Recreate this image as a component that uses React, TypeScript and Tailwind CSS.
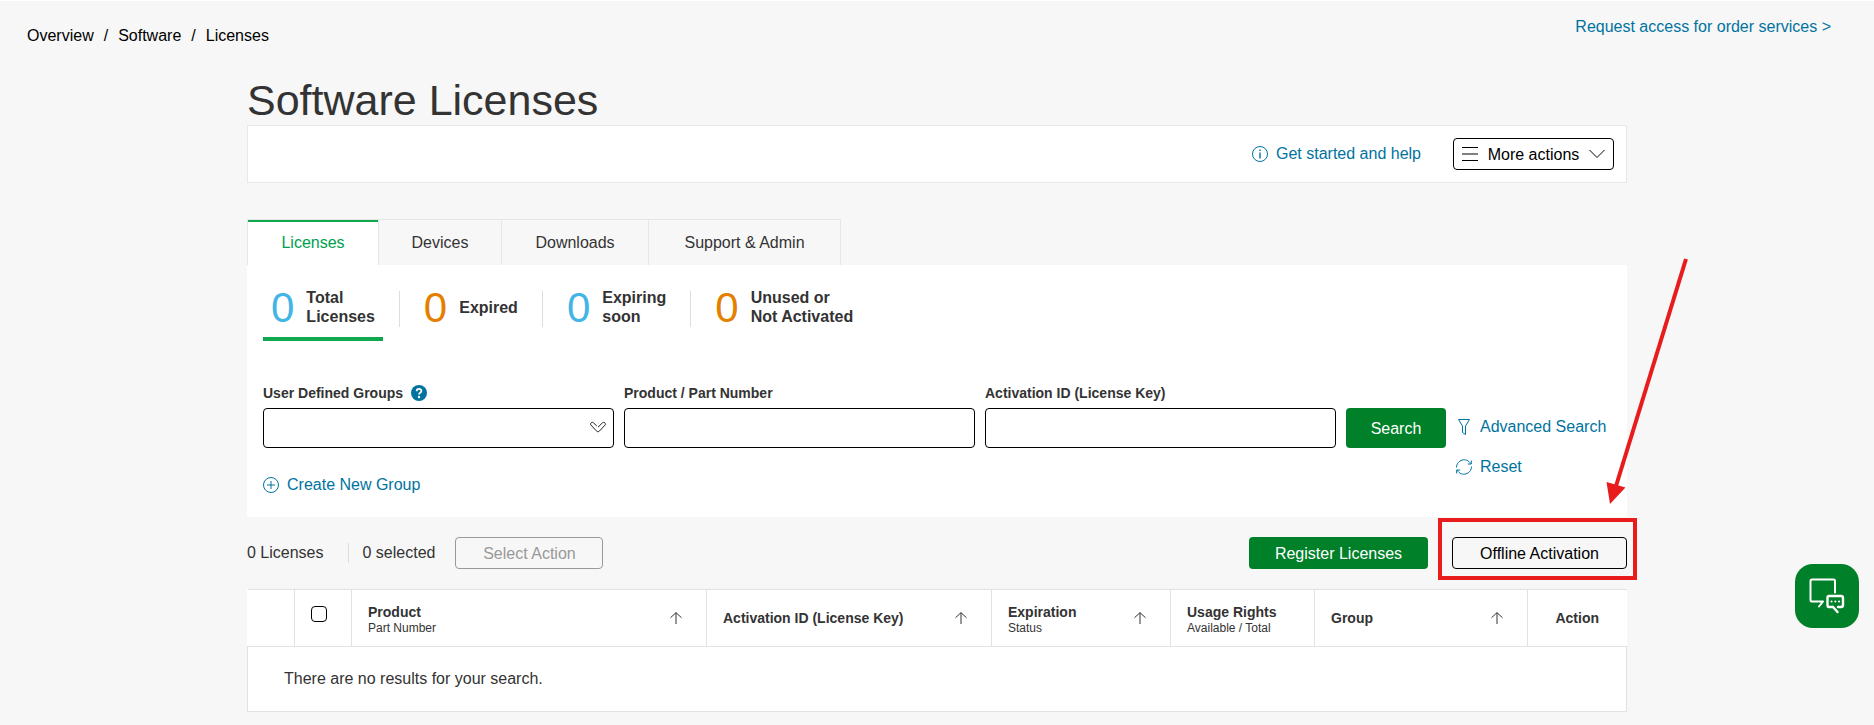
import React from 'react';

const stats = [
  { value: 0, lines: ['Total', 'Licenses'], color: 'text-[#42b4e6]', active: true },
  { value: 0, lines: ['Expired'], color: 'text-[#e47f00]', active: false },
  { value: 0, lines: ['Expiring', 'soon'], color: 'text-[#42b4e6]', active: false },
  { value: 0, lines: ['Unused or', 'Not Activated'], color: 'text-[#e47f00]', active: false },
];

const tabs = [
  { name: 'Licenses', width: 'w-[131px]' },
  { name: 'Devices', width: 'w-[123px]' },
  { name: 'Downloads', width: 'w-[147px]' },
  { name: 'Support & Admin', width: 'w-[192px]' },
];

const SortArrow: React.FC = () => (
  <svg className="h-3 w-3 shrink-0" viewBox="0 0 12 12" fill="none" stroke="#333" aria-hidden="true">
    <path d="M6 12V0.7M0.5 5.7L6 0.7L11.5 5.7" />
  </svg>
);

interface HeadingProps {
  title: string;
  sub?: string;
  sortable?: boolean;
}

const Heading: React.FC<HeadingProps> = ({ title, sub, sortable }) => (
  <div className="flex items-center justify-between pl-4 pr-6">
    <div>
      <div className="text-sm leading-5 font-bold">{title}</div>
      {sub && <div className="text-xs leading-3 font-normal">{sub}</div>}
    </div>
    {sortable && <SortArrow />}
  </div>
);

const Header: React.FC = () => (
  <header className="flex items-start justify-between border-t border-white pl-[27px] pr-[43px]">
    <nav aria-label="Breadcrumb" className="pt-[23px] text-black">
      <ol className="flex gap-[10px]">
        <li><a href="#overview">Overview</a></li>
        <li aria-hidden="true">/</li>
        <li><a href="#software">Software</a></li>
        <li aria-hidden="true">/</li>
        <li><a href="#licenses">Licenses</a></li>
      </ol>
    </nav>
    <a href="#order-services" className="pt-[14px] text-[#0073a0]">Request access for order services &gt;</a>
  </header>
);

const ActionBar: React.FC = () => (
  <div className="flex h-[58px] items-center justify-end border border-[#e8e8e8] bg-white pr-3">
    <a href="#help" className="mr-8 flex items-center gap-2 text-[#0073a0]">
      <svg className="h-4 w-4" viewBox="0 0 16 16" fill="none" stroke="currentColor" aria-hidden="true">
        <circle cx="8" cy="8" r="7.5" />
        <path d="M8 6.5V12.5M8 3.5V5" strokeWidth="1.4" />
      </svg>
      Get started and help
    </a>
    <button type="button" className="flex h-8 w-[161px] items-center justify-between rounded border border-black px-2 text-black">
      <svg className="h-4 w-4" viewBox="0 0 16 16" stroke="currentColor" aria-hidden="true">
        <path d="M0 1.5H16M0 8H16M0 14.5H16" />
      </svg>
      <span className="pt-0.5">More actions</span>
      <svg className="h-4 w-4" viewBox="0 0 16 16" fill="none" stroke="currentColor" aria-hidden="true">
        <path d="M0.5 4L8 11.5L15.5 4" />
      </svg>
    </button>
  </div>
);

const Tabs: React.FC = () => (
  <div role="tablist" className="flex h-[46px] border-l border-[#e6e6e6]">
    {tabs.map((tab, i) => (
      <button
        key={tab.name}
        type="button"
        role="tab"
        aria-selected={i === 0}
        className={`border-t border-r border-[#e6e6e6] ${tab.width} ${
          i === 0 ? 'bg-white text-[#00a04e] shadow-[inset_0_2px_0_#0fa84e]' : ''
        }`}
      >
        {tab.name}
      </button>
    ))}
  </div>
);

const Stats: React.FC = () => (
  <div className="flex items-start">
    {stats.map((stat, i) => (
      <React.Fragment key={stat.lines[0]}>
        {i > 0 && <div className="mx-4 mt-[10px] h-9 w-px bg-[#dedede]" />}
        <button
          type="button"
          className={`flex h-[60px] items-start px-2 text-left ${stat.active ? 'border-b-4 border-[#0fa84e]' : ''}`}
        >
          <span className={`mr-3 text-[42px] leading-[54px] ${stat.color}`}>{stat.value}</span>
          <span className="flex h-[52px] flex-col justify-center leading-[19px] font-bold">
            {stat.lines.map((line) => (
              <span key={line}>{line}</span>
            ))}
          </span>
        </button>
      </React.Fragment>
    ))}
  </div>
);

const SearchForm: React.FC = () => (
  <form className="mt-[42px] flex gap-[10px]" onSubmit={(e) => e.preventDefault()}>
    <div className="flex-1">
      <div className="mb-[5px] flex h-5 items-center gap-2">
        <label htmlFor="groups" className="text-sm font-bold">User Defined Groups</label>
        <svg className="h-4 w-4" viewBox="0 0 16 16" aria-hidden="true">
          <circle cx="8" cy="8" r="8" fill="#0073a0" />
          <path d="M5.7 6.2C5.7 3.2 10.4 3.2 10.4 6C10.4 7.8 8 7.8 8 9.6" fill="none" stroke="#fff" strokeWidth="1.8" />
          <circle cx="8" cy="12" r="1.2" fill="#fff" />
        </svg>
      </div>
      <div className="relative">
        <select id="groups" className="block h-10 w-full appearance-none rounded border border-black bg-white px-3" />
        <svg className="pointer-events-none absolute top-3 right-2 h-4 w-4" viewBox="0 0 16 16" fill="none" stroke="#222" aria-hidden="true">
          <path d="M8 7.2L12.4 2.9C13.2 2.1 14.2 2.2 14.9 2.9C15.6 3.6 15.6 4.4 15 5.1L9.6 10.9C8.6 12 7.4 12 6.4 10.9L1 5.1C0.4 4.4 0.4 3.6 1.1 2.9C1.8 2.2 2.8 2.1 3.6 2.9L6.8 6" />
        </svg>
      </div>
      <a href="#new-group" className="mt-[25px] flex items-center gap-2 text-[#0073a0]">
        <svg className="h-4 w-4" viewBox="0 0 16 16" fill="none" stroke="currentColor" aria-hidden="true">
          <circle cx="8" cy="8" r="7.5" />
          <path d="M8 4V12M4 8H12" />
        </svg>
        Create New Group
      </a>
    </div>
    <div className="flex-1">
      <label htmlFor="product" className="mb-[5px] block h-5 text-sm font-bold">Product / Part Number</label>
      <input id="product" type="text" className="block h-10 w-full rounded border border-black bg-white px-3" />
    </div>
    <div className="flex-1">
      <label htmlFor="activation" className="mb-[5px] block h-5 text-sm font-bold">Activation ID (License Key)</label>
      <input id="activation" type="text" className="block h-10 w-full rounded border border-black bg-white px-3" />
    </div>
    <button type="submit" className="mt-[25px] h-10 w-[100px] rounded bg-[#008029] pt-0.5 text-white">Search</button>
    <div className="mt-6 w-[155px] text-[#0073a0]">
      <a href="#advanced" className="flex h-10 items-center gap-2">
        <svg className="h-4 w-4" viewBox="0 0 16 16" fill="none" stroke="currentColor" aria-hidden="true">
          <path d="M2.5 0.5H13.5L9.5 7V15.5L6.5 13.5V7Z" />
        </svg>
        Advanced Search
      </a>
      <a href="#reset" className="flex h-10 items-center gap-2">
        <svg className="h-4 w-4" viewBox="0 0 16 16" fill="none" stroke="currentColor" aria-hidden="true">
          <path d="M0.5 8.5C0.5 1 10.500 -2.500 14.800 4.800M15.500 7.500C15.500 15 5.500 18.500 1.200 11.200M15.300 1.500V5H11.800M0.700 14.500V11H4.200" />
        </svg>
        Reset
      </a>
    </div>
  </form>
);

const Toolbar: React.FC = () => (
  <div className="flex items-center py-5">
    <span>0 Licenses</span>
    <div className="ml-6 mr-[14px] h-5 w-px bg-[#dedede]" />
    <span>0 selected</span>
    <button type="button" disabled className="ml-5 h-8 w-[148px] rounded border border-[#999] pt-0.5 text-[#999]">
      Select Action
    </button>
    <button type="button" className="ml-auto h-8 w-[179px] rounded bg-[#008029] pt-0.5 text-white">
      Register Licenses
    </button>
    <div className="relative ml-6">
      <button type="button" className="block h-8 w-[175px] rounded border border-black pt-0.5 text-black">
        Offline Activation
      </button>
      {/* Callout frame and arrow */}
      <div className="pointer-events-none absolute -top-[19px] -right-[10px] h-[62px] w-[199px] border-4 border-[#e81c1c]" />
      <svg className="pointer-events-none absolute right-[-62px] bottom-[63px] h-[250px] w-[84px]" viewBox="0 0 84 250" aria-hidden="true">
        <path d="M81 3L11 230" stroke="#e81c1c" strokeWidth="4" />
        <path d="M1.5 226L20.5 231.5L5 248Z" fill="#e81c1c" />
      </svg>
    </div>
  </div>
);

const LicenseTable: React.FC = () => (
  <table className="w-full table-fixed border-collapse bg-white text-left">
    <colgroup>
      <col className="w-[47px]" />
      <col className="w-[57px]" />
      <col />
      <col className="w-[285px]" />
      <col className="w-[179px]" />
      <col className="w-[144px]" />
      <col className="w-[213px]" />
      <col className="w-[99px]" />
    </colgroup>
    <thead>
      <tr className="h-[57px] border-y border-[#e2e2e2]">
        <th className="border-r border-[#e2e2e2]" />
        <th className="border-r border-[#e2e2e2] px-4 pb-2">
          <input
            type="checkbox"
            aria-label="Select all licenses"
            className="block h-4 w-4 appearance-none rounded border border-black bg-white"
          />
        </th>
        <th className="border-r border-[#e2e2e2]"><Heading title="Product" sub="Part Number" sortable /></th>
        <th className="border-r border-[#e2e2e2]"><Heading title="Activation ID (License Key)" sortable /></th>
        <th className="border-r border-[#e2e2e2]"><Heading title="Expiration" sub="Status" sortable /></th>
        <th className="border-r border-[#e2e2e2]"><Heading title="Usage Rights" sub="Available / Total" /></th>
        <th className="border-r border-[#e2e2e2]"><Heading title="Group" sortable /></th>
        <th className="text-center text-sm font-bold">Action</th>
      </tr>
    </thead>
    <tbody>
      <tr className="h-[65px]">
        <td colSpan={8} className="border border-[#e2e2e2] px-9">There are no results for your search.</td>
      </tr>
    </tbody>
  </table>
);

const ChatButton: React.FC = () => (
  <button
    type="button"
    aria-label="Open chat"
    className="fixed right-[15px] bottom-[97px] flex h-16 w-16 items-center justify-center rounded-[18px] bg-[#008029]"
  >
    <svg className="h-9 w-9" viewBox="0 0 36 36" fill="none" stroke="#fff" strokeWidth="2" strokeLinecap="round" strokeLinejoin="round" aria-hidden="true">
      <path d="M26 14.5V3Q26 1.5 24.5 1.5H3Q1.5 1.5 1.5 3V22Q1.5 23.5 3 23.5H14L10 28.5" />
      <path d="M20 18H32Q34 18 34 20V27Q34 29 32 29H29M24 29H20Q18.5 29 18.5 27V20Q18.5 18 20 18M24 29L28.5 34" strokeWidth="2.4" />
      <path d="M22.5 23.5H22.6M26.3 23.5H26.4M30 23.5H30.1" />
    </svg>
  </button>
);

const App: React.FC = () => {
  return (
    <div className="min-h-screen bg-[#f7f7f7] font-['Liberation_Sans',Arial,sans-serif] text-base leading-6 text-[#333]">
      <Header />
      <main className="mx-auto mt-[27px] max-w-[1380px]">
        <h1 className="text-[43px] leading-[50px]">Software Licenses</h1>
        <ActionBar />
        <div className="mt-9">
          <Tabs />
          <section className="bg-white px-4 pt-4 pb-5">
            <Stats />
            <SearchForm />
          </section>
        </div>
        <Toolbar />
        <LicenseTable />
      </main>
      <ChatButton />
    </div>
  );
};

export default App;
